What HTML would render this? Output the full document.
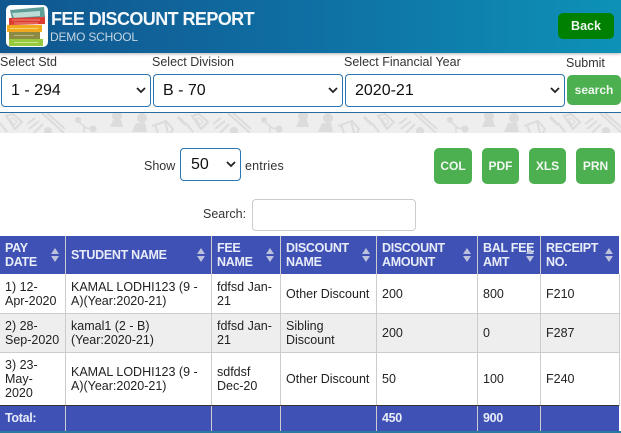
<!DOCTYPE html>
<html><head><meta charset="utf-8">
<style>
html,body{margin:0;padding:0;background:#fff}
body{width:621px;height:433px;position:relative;overflow:hidden;font-family:"Liberation Sans",sans-serif;color:#333}
.a{position:absolute;white-space:nowrap}
.t{font-size:12.5px;line-height:14px;color:#222}
.h{font-size:12.5px;line-height:14px;color:#e8ecf8;font-weight:bold;letter-spacing:-.3px}
.sel{position:absolute;box-sizing:border-box;background:#fff;border:1px solid #2a75b3;border-radius:4px;height:33px;top:74px;font-size:16px;line-height:31px;padding-left:9px;color:#111}
.btn{position:absolute;background:#4caf50;color:#f2f8f2;border-radius:5px;font-size:12px;font-weight:bold;text-align:center;top:148px;height:36px;line-height:36px}
.lab{font-size:12.5px;color:#333;line-height:14px}
.v{position:absolute;width:1px;background:#ccc}
.hl{position:absolute;left:0;width:619px;height:1px;background:#ccc}
</style></head><body>
<div class="a" style="left:0;top:0;width:621px;height:53px;background:linear-gradient(90deg,#10568f 0%,#0f6fa3 50%,#0d92b6 100%);box-shadow:0 1px 3px rgba(0,0,0,.3)"></div>
<svg class="a" style="left:6px;top:5px" width="42" height="42" viewBox="0 0 42 42">
<rect width="42" height="42" rx="5" fill="#fff"/>
<path d="M4 5L38 2l1 10-33 2z" fill="#5e9e96"/>
<path d="M6 8l28-2v5L8 13z" fill="#bcdcd6"/>
<path d="M3 13l36-1v7l-36 1z" fill="#dd3a30"/>
<path d="M6 15h28M8 18h24" stroke="#f08a78" stroke-width="1"/>
<rect x="1" y="20" width="35" height="7" fill="#f0aa1e"/>
<path d="M4 23.500h28" stroke="#f8d070" stroke-width="1"/>
<rect x="3" y="27" width="31" height="7" fill="#8c8a45"/>
<path d="M8 30.500h20" stroke="#b8b678" stroke-width="1"/>
<rect x="3" y="34" width="34" height="7" fill="#97c93e"/>
<path d="M8 37.500h24" stroke="#c8e68c" stroke-width="1"/>
</svg>
<div class="a" style="left:51px;top:9px;font-size:18px;line-height:20px;font-weight:bold;color:#f4f8fb;letter-spacing:-.58px">FEE DISCOUNT REPORT</div>
<div class="a" style="left:50px;top:30px;font-size:12px;line-height:14px;color:#c5d6e3;letter-spacing:-.2px">DEMO SCHOOL</div>
<div class="a" style="left:558px;top:13px;width:56px;height:26px;background:#008000;border-radius:5px;color:#eef7ee;font-size:12.5px;font-weight:bold;line-height:26px;text-align:center">Back</div>

<div class="a lab" style="left:0;top:55px">Select Std</div>
<div class="a lab" style="left:152px;top:55px">Select Division</div>
<div class="a lab" style="left:344px;top:55px">Select Financial Year</div>
<div class="a lab" style="left:566px;top:56px">Submit</div>
<div class="sel" style="left:1px;width:150px">1 - 294</div>
<div class="sel" style="left:153px;width:190px">B - 70</div>
<div class="sel" style="left:345px;width:220px">2020-21</div>
<svg class="a" style="left:136px;top:87px" width="10" height="7"><path d="M1 1l4 4 4-4" fill="none" stroke="#222" stroke-width="1.8"/></svg>
<svg class="a" style="left:328px;top:87px" width="10" height="7"><path d="M1 1l4 4 4-4" fill="none" stroke="#222" stroke-width="1.8"/></svg>
<svg class="a" style="left:550px;top:87px" width="10" height="7"><path d="M1 1l4 4 4-4" fill="none" stroke="#222" stroke-width="1.8"/></svg>
<div class="a" style="left:567px;top:75px;width:54px;height:30px;background:#4caf50;border-radius:5px;color:#eef7ee;font-size:12px;font-weight:bold;line-height:30px;text-align:center">search</div>

<svg class="a" style="left:0;top:113px" width="621" height="20">
<defs><pattern id="p" x="0" y="0" width="186" height="20" patternUnits="userSpaceOnUse">
<rect width="186" height="20" fill="#eee"/>
<g fill="none" stroke="#dcdcdc" stroke-width="2">
<path d="M0 10l7 9M6 3l7-2 9 8-7 7z"/>
<path d="M10 6l3-1 4 4-3 3z" stroke-width="1"/>
<path d="M27 11l8-6M29 16l10-8M34 20l9-9M42 0l22 20M47 0l18 16"/>
<path d="M78 8l8 7 8 1M84 14v8" stroke-width="1.500"/>
<path d="M152 13l14-5 7 8-2 4M155 12l3 8M165 8l3 12"/>
<path d="M178 4l8 8" stroke-width="3"/>
</g>
<g fill="#dcdcdc"><circle cx="78" cy="7" r="3"/><circle cx="93" cy="16" r="3.500"/><circle cx="48" cy="18" r="4"/><circle cx="117" cy="3" r="5"/><path d="M110 14l3-7h8l2 7z"/><circle cx="142" cy="5" r="5"/><path d="M132 19l4-9h9l2 9z"/></g>
</pattern></defs>
<rect width="621" height="20" fill="url(#p)"/>
</svg>
<div class="a" style="left:0;top:112px;width:621px;height:1px;background:#2b6a9e"></div>

<div class="a lab" style="left:144px;top:159px">Show</div>
<div class="a" style="left:180px;top:148px;width:61px;height:33px;box-sizing:border-box;border:1px solid #2a75b3;border-radius:4px;font-size:16px;line-height:31px;padding-left:10px;color:#111">50</div>
<svg class="a" style="left:226px;top:161px" width="10" height="7"><path d="M1 1l4 4 4-4" fill="none" stroke="#222" stroke-width="1.8"/></svg>
<div class="a lab" style="left:245px;top:159px;letter-spacing:.2px">entries</div>
<div class="btn" style="left:434px;width:38px">COL</div>
<div class="btn" style="left:482px;width:37px">PDF</div>
<div class="btn" style="left:529px;width:37px">XLS</div>
<div class="btn" style="left:576px;width:39px">PRN</div>
<div class="a lab" style="left:203px;top:207px">Search:</div>
<div class="a" style="left:252px;top:199px;width:164px;height:32px;box-sizing:border-box;border:1px solid #ccc;border-radius:4px"></div>

<div class="a" style="left:0;top:236px;width:619px;height:38px;background:#3f51b5"></div>
<div class="a" style="left:0;top:313px;width:619px;height:39px;background:#eee"></div>
<div class="a" style="left:0;top:406px;width:619px;height:25px;background:#3f51b5"></div>
<div class="a" style="left:0;top:431px;width:621px;height:2px;background:#2a7a9e"></div>
<div class="hl" style="top:313px"></div>
<div class="hl" style="top:352px"></div>
<div class="v" style="left:65px;top:236px;height:195px"></div>
<div class="v" style="left:211px;top:236px;height:195px"></div>
<div class="v" style="left:280px;top:236px;height:195px"></div>
<div class="v" style="left:376px;top:236px;height:195px"></div>
<div class="v" style="left:477px;top:236px;height:195px"></div>
<div class="v" style="left:540px;top:236px;height:195px"></div>
<div class="a" style="left:619px;top:274px;width:1px;height:132px;background:#ccc"></div>
<div class="a" style="left:0;top:405px;width:619px;height:1px;background:#333"></div>

<div class="a h" style="left:5px;top:241px">PAY<br>DATE</div>
<div class="a h" style="left:71px;top:248px">STUDENT NAME</div>
<div class="a h" style="left:217px;top:241px">FEE<br>NAME</div>
<div class="a h" style="left:286px;top:241px">DISCOUNT<br>NAME</div>
<div class="a h" style="left:382px;top:241px">DISCOUNT<br>AMOUNT</div>
<div class="a h" style="left:483px;top:241px">BAL FEE<br>AMT</div>
<div class="a h" style="left:546px;top:241px">RECEIPT<br>NO.</div>
<svg class="a" style="left:0;top:247px" width="621" height="16" fill="#bcc2dc">
<path d="M51 7l4-6 4 6zM51 9h8l-4 6z"/>
<path d="M197 7l4-6 4 6zM197 9h8l-4 6z"/>
<path d="M266 7l4-6 4 6zM266 9h8l-4 6z"/>
<path d="M362 7l4-6 4 6zM362 9h8l-4 6z"/>
<path d="M463 7l4-6 4 6zM463 9h8l-4 6z"/>
<path d="M526 7l4-6 4 6zM526 9h8l-4 6z"/>
<path d="M605 7l4-6 4 6zM605 9h8l-4 6z"/>
</svg>

<div class="a t" style="left:5px;top:280px">1) 12-<br>Apr-2020</div>
<div class="a t" style="left:71px;top:280px">KAMAL LODHI123 (9 -<br>A)(Year:2020-21)</div>
<div class="a t" style="left:217px;top:280px">fdfsd Jan-<br>21</div>
<div class="a t" style="left:286px;top:287px">Other Discount</div>
<div class="a t" style="left:382px;top:287px">200</div>
<div class="a t" style="left:483px;top:287px">800</div>
<div class="a t" style="left:546px;top:287px">F210</div>

<div class="a t" style="left:5px;top:319px">2) 28-<br>Sep-2020</div>
<div class="a t" style="left:71px;top:319px">kamal1 (2 - B)<br>(Year:2020-21)</div>
<div class="a t" style="left:217px;top:319px">fdfsd Jan-<br>21</div>
<div class="a t" style="left:286px;top:319px">Sibling<br>Discount</div>
<div class="a t" style="left:382px;top:326px">200</div>
<div class="a t" style="left:483px;top:326px">0</div>
<div class="a t" style="left:546px;top:326px">F287</div>

<div class="a t" style="left:5px;top:358px">3) 23-<br>May-<br>2020</div>
<div class="a t" style="left:71px;top:365px">KAMAL LODHI123 (9 -<br>A)(Year:2020-21)</div>
<div class="a t" style="left:217px;top:365px">sdfdsf<br>Dec-20</div>
<div class="a t" style="left:286px;top:372px">Other Discount</div>
<div class="a t" style="left:382px;top:372px">50</div>
<div class="a t" style="left:483px;top:372px">100</div>
<div class="a t" style="left:546px;top:372px">F240</div>

<div class="a h" style="left:5px;top:411px">Total:</div>
<div class="a h" style="left:382px;top:411px">450</div>
<div class="a h" style="left:483px;top:411px">900</div>
</body></html>
